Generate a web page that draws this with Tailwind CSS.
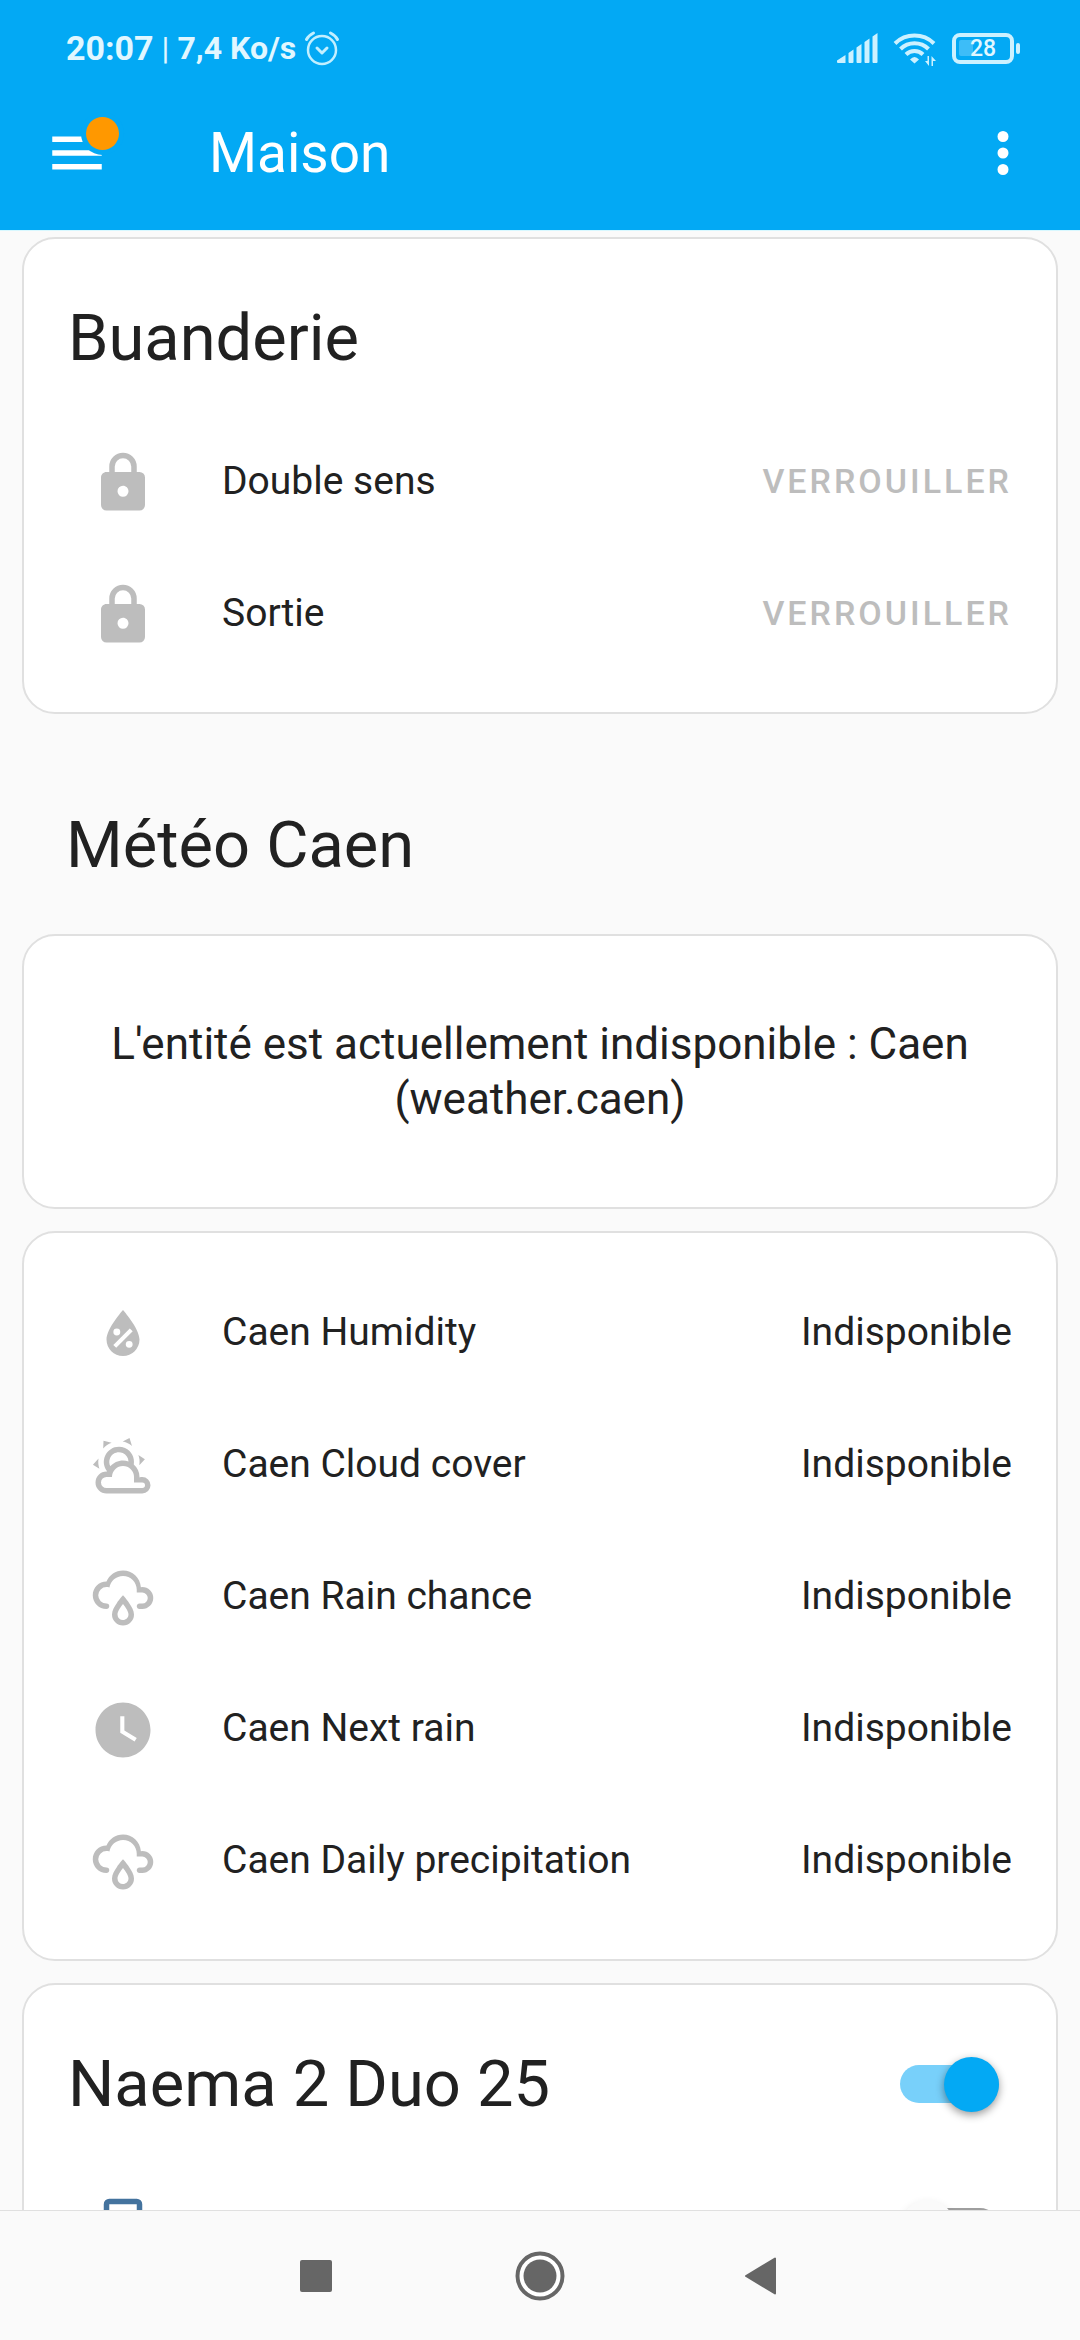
<!DOCTYPE html>
<html lang="fr">
  <head>
    <meta charset="UTF-8" />
    <meta name="viewport" content="width=device-width, initial-scale=1.0" />
    <title>Maison</title>
    <script src="https://cdn.jsdelivr.net/npm/@tailwindcss/browser@4"></script>
  </head>
  <body
    class="flex h-screen flex-col overflow-hidden bg-[#fafafa] font-['Roboto',sans-serif] text-[#212121]"
  >
    <!-- Icon definitions -->
    <svg class="hidden" xmlns="http://www.w3.org/2000/svg">
      <symbol id="icon-lock" viewBox="0 0 24 24">
        <path
          d="M12,17A2,2 0 0,0 14,15C14,13.89 13.1,13 12,13A2,2 0 0,0 10,15A2,2 0 0,0 12,17M18,8A2,2 0 0,1 20,10V20A2,2 0 0,1 18,22H6A2,2 0 0,1 4,20V10C4,8.89 4.9,8 6,8H7V6A5,5 0 0,1 12,1A5,5 0 0,1 17,6V8H18M12,3A3,3 0 0,0 9,6V8H15V6A3,3 0 0,0 12,3Z"
        />
      </symbol>
      <symbol id="icon-rain" viewBox="0 0 24 24">
        <path
          d="M6,14.03A1,1 0 0,1 7,15.03C7,15.58 6.55,16.03 6,16.03C3.24,16.03 1,13.79 1,11.03C1,8.27 3.24,6.03 6,6.03C7,3.68 9.3,2.03 12,2.03C15.43,2.03 18.24,4.69 18.5,8.06L19,8.03A4,4 0 0,1 23,12.03C23,14.23 21.21,16.03 19,16.03H18C17.45,16.03 17,15.58 17,15.03C17,14.47 17.45,14.03 18,14.03H19A2,2 0 0,0 21,12.03A2,2 0 0,0 19,10.03H17V9.03C17,6.27 14.76,4.03 12,4.03C9.5,4.03 7.45,5.84 7.06,8.21C6.73,8.09 6.37,8.03 6,8.03A3,3 0 0,0 3,11.03A3,3 0 0,0 6,14.03M12,14.15C12.18,14.39 12.37,14.66 12.56,14.94C13,15.56 14,17.03 14,18C14,19.11 13.1,20 12,20A2,2 0 0,1 10,18C10,17.03 11,15.56 11.44,14.94C11.63,14.66 11.82,14.4 12,14.15M12,11.03L11.5,11.59C11.5,11.59 10.65,12.55 9.79,13.81C8.93,15.06 8,16.56 8,18A4,4 0 0,0 12,22A4,4 0 0,0 16,18C16,16.56 15.07,15.06 14.21,13.81C13.35,12.55 12.5,11.59 12.5,11.59"
        />
      </symbol>
    </svg>

    <header class="shrink-0 border-b border-[#d8f8ff] bg-[#03a9f4]">
      <!-- Status bar -->
      <div class="flex h-[76px] items-center justify-between pt-5 pr-[60px] pl-[66px] text-[#e1f7ff]">
        <div class="flex items-center gap-2">
          <span class="text-[34px] leading-10 font-bold">20:07</span>
          <span class="text-[32px] leading-10">|</span>
          <span class="text-[32px] leading-10 font-bold">7,4 Ko/s</span>
          <svg
            class="size-9 stroke-[#c2efff]"
            viewBox="0 0 36 36"
            fill="none"
            stroke-width="3"
            stroke-linecap="round"
            stroke-linejoin="round"
          >
            <circle cx="18" cy="20" r="14" stroke-width="2.5" />
            <path d="M13 18l5 5 5-5" />
            <path d="M2.5 9.5c1.5-3 4-5 7-6.5M33.5 9.5c-1.5-3-4-5-7-6.5" />
          </svg>
        </div>
        <div class="flex items-center gap-[15px]">
          <svg class="h-[30px] w-[41px] fill-[#ccf1ff]" viewBox="0 0 41 30">
            <path
              d="M0 27.5L8.5 22v8H1q-1 0-1-1zM11.500 20l5-3.500V29q0 1-1 1h-3q-1 0-1-1zM19.500 14.500l5-3.500v18q0 1-1 1h-3q-1 0-1-1zM27.500 9l5-3.500V29q0 1-1 1h-3q-1 0-1-1zM35.500 3.500l5-3.500v29q0 1-1 1h-3q-1 0-1-1z"
            />
          </svg>
          <svg class="h-9 w-11" viewBox="0 0 44 36" fill="none">
            <g stroke="#ccf1ff" stroke-width="4">
              <path d="M2 13.5a28 28 0 0 1 39 0" />
              <path d="M7.5 19a20 20 0 0 1 28 0" />
              <path d="M13 24.5a12 12 0 0 1 17 0" />
            </g>
            <path d="M21.5 33.5l-4.5-4q4.5-5 9 0z" fill="#ccf1ff" />
            <path d="M36 26v10l-4-5h2.5v-5zM38.5 36V26l4.5 5h-3v5z" fill="#ccf1ff" />
          </svg>
          <div class="flex items-center gap-[2px]">
            <div
              class="relative flex h-[31px] w-[62px] items-center justify-center rounded-[8px] border-4 border-[#ccf1ff]"
            >
              <div class="absolute left-[3px] h-4 w-[14px] rounded-[2px] bg-[#3dbdf8]"></div>
              <span class="relative pt-[2px] text-[23px] leading-6 font-medium">28</span>
            </div>
            <div class="h-[11px] w-1 rounded-[2px] bg-[#ccf1ff]"></div>
          </div>
        </div>
      </div>

      <!-- Toolbar -->
      <div class="flex h-[154px] items-center px-11 text-white">
        <button class="relative" aria-label="Menu">
          <svg class="size-[66px] fill-white" viewBox="0 0 24 24">
            <path d="M3,6H21V8H3V6M3,11H21V13H3V11M3,16H21V18H3V16Z" />
          </svg>
          <span
            class="absolute -top-[3px] left-[42px] size-[33px] rounded-full bg-[#ff9800] ring-[5px] ring-[#03a9f4]"
          ></span>
        </button>
        <h1 class="ml-[99px] flex-1 text-[55px] leading-[66px]">Maison</h1>
        <button aria-label="Plus d'options">
          <svg class="size-[66px] fill-white" viewBox="0 0 24 24">
            <path
              d="M12,16A2,2 0 0,1 14,18A2,2 0 0,1 12,20A2,2 0 0,1 10,18A2,2 0 0,1 12,16M12,10A2,2 0 0,1 14,12A2,2 0 0,1 12,14A2,2 0 0,1 10,12A2,2 0 0,1 12,10M12,4A2,2 0 0,1 14,6A2,2 0 0,1 12,8A2,2 0 0,1 10,6A2,2 0 0,1 12,4Z"
            />
          </svg>
        </button>
      </div>
    </header>

    <main class="flex min-h-0 flex-1 flex-col gap-[22px] overflow-hidden px-[22px] pt-[6px]">
      <!-- Buanderie -->
      <section class="shrink-0 rounded-[33px] border-2 border-[#e0e0e0] bg-white px-11 pt-[33px] pb-11">
        <h2 class="mb-[22px] text-[65px] leading-[132px]">Buanderie</h2>
        <ul class="flex flex-col gap-[22px] text-[39px] leading-[55px]">
          <li class="flex h-[110px] items-center">
            <div class="mr-11 flex w-[110px] justify-center pt-1">
              <svg class="size-[66px] fill-[#bdbdbd]"><use href="#icon-lock" /></svg>
            </div>
            <span class="flex-1">Double sens</span>
            <button class="text-[34px] font-medium tracking-[3px] text-[#bdbdbd]" disabled>
              VERROUILLER
            </button>
          </li>
          <li class="flex h-[110px] items-center">
            <div class="mr-11 flex w-[110px] justify-center pt-1">
              <svg class="size-[66px] fill-[#bdbdbd]"><use href="#icon-lock" /></svg>
            </div>
            <span class="flex-1">Sortie</span>
            <button class="text-[34px] font-medium tracking-[3px] text-[#bdbdbd]" disabled>
              VERROUILLER
            </button>
          </li>
        </ul>
      </section>

      <!-- Météo -->
      <h2 class="shrink-0 px-11 pt-[42px] text-[65px] leading-[134px]">Météo Caen</h2>

      <section
        class="flex min-h-[275px] shrink-0 items-center justify-center rounded-[33px] border-2 border-[#e0e0e0] bg-white px-[66px]"
      >
        <p class="text-center text-[44px] leading-[55px]">
          L'entité est actuellement indisponible : Caen (weather.caen)
        </p>
      </section>

      <section class="shrink-0 rounded-[33px] border-2 border-[#e0e0e0] bg-white p-11">
        <ul class="flex flex-col gap-[22px] text-[39px] leading-[55px]">
          <li class="flex h-[110px] items-center">
            <div class="mr-11 flex w-[110px] justify-center pt-1">
              <svg class="size-[66px] fill-[#bdbdbd]" viewBox="0 0 24 24">
                <path
                  d="M12,3.25C12,3.25 6,10 6,14C6,17.32 8.69,20 12,20A6,6 0 0,0 18,14C18,10 12,3.25 12,3.25M14.47,9.97L15.53,11.03L9.53,17.03L8.47,15.97M9.75,10A1.25,1.25 0 0,1 11,11.25A1.25,1.25 0 0,1 9.75,12.5A1.25,1.25 0 0,1 8.5,11.25A1.25,1.25 0 0,1 9.75,10M14.25,14.5A1.25,1.25 0 0,1 15.5,15.75A1.25,1.25 0 0,1 14.25,17A1.25,1.25 0 0,1 13,15.75A1.25,1.25 0 0,1 14.25,14.5Z"
                />
              </svg>
            </div>
            <span class="flex-1">Caen Humidity</span>
            <span>Indisponible</span>
          </li>
          <li class="flex h-[110px] items-center">
            <div class="mr-11 flex w-[110px] justify-center pt-1">
              <svg class="size-[66px] fill-[#bdbdbd]" viewBox="0 0 24 24">
                <path
                  d="M12.74,5.47C15.1,6.5 16.35,9.03 15.92,11.46C17.19,12.56 18,14.19 18,16V16.17C18.31,16.06 18.65,16 19,16A3,3 0 0,1 22,19A3,3 0 0,1 19,22H6A4,4 0 0,1 2,18A4,4 0 0,1 6,14H6.27C5,12.45 4.6,10.24 5.5,8.26C6.72,5.5 9.97,4.24 12.74,5.47M11.93,7.3C10.16,6.5 8.09,7.31 7.31,9.07C6.85,10.09 6.93,11.22 7.41,12.13C8.5,10.83 10.16,10 12,10C12.7,10 13.38,10.12 14,10.34C13.94,9.06 13.18,7.86 11.93,7.3M13.55,3.64C13,3.4 12.45,3.23 11.88,3.12L14.37,1.82L15.27,4.71C14.76,4.29 14.19,3.93 13.55,3.64M6.09,4.44C5.6,4.79 5.17,5.19 4.8,5.63L4.91,2.82L7.87,3.5C7.25,3.71 6.65,4.03 6.09,4.44M18,9.71C17.91,9.12 17.78,8.55 17.59,8L19.97,9.5L17.92,11.73C18.03,11.08 18.05,10.4 18,9.71M3.04,11.3C3.11,11.9 3.24,12.47 3.43,13L1.06,11.5L3.1,9.28C3,9.93 2.97,10.61 3.04,11.3M19,18H16V16A4,4 0 0,0 12,12A4,4 0 0,0 8,16H6A2,2 0 0,0 4,18A2,2 0 0,0 6,20H19A1,1 0 0,0 20,19A1,1 0 0,0 19,18Z"
                />
              </svg>
            </div>
            <span class="flex-1">Caen Cloud cover</span>
            <span>Indisponible</span>
          </li>
          <li class="flex h-[110px] items-center">
            <div class="mr-11 flex w-[110px] justify-center pt-1">
              <svg class="size-[66px] fill-[#bdbdbd]"><use href="#icon-rain" /></svg>
            </div>
            <span class="flex-1">Caen Rain chance</span>
            <span>Indisponible</span>
          </li>
          <li class="flex h-[110px] items-center">
            <div class="mr-11 flex w-[110px] justify-center pt-1">
              <svg class="size-[66px] fill-[#bdbdbd]" viewBox="0 0 24 24">
                <path
                  d="M12 2C6.5 2 2 6.5 2 12S6.5 22 12 22 22 17.5 22 12 17.5 2 12 2M16.2 16.2L11 13V7H12.5V12.2L17 14.9L16.2 16.2Z"
                />
              </svg>
            </div>
            <span class="flex-1">Caen Next rain</span>
            <span>Indisponible</span>
          </li>
          <li class="flex h-[110px] items-center">
            <div class="mr-11 flex w-[110px] justify-center pt-1">
              <svg class="size-[66px] fill-[#bdbdbd]"><use href="#icon-rain" /></svg>
            </div>
            <span class="flex-1">Caen Daily precipitation</span>
            <span>Indisponible</span>
          </li>
        </ul>
      </section>

      <!-- Naema -->
      <section class="shrink-0 rounded-[33px] border-2 border-[#e0e0e0] bg-white px-11 pt-[33px] pb-11">
        <div class="mb-[22px] flex items-center justify-between pr-[13px]">
          <h2 class="text-[65px] leading-[132px]">
            <label for="naema">Naema 2 Duo 25</label>
          </h2>
          <input
            id="naema"
            type="checkbox"
            checked
            class="relative h-[38px] w-[99px] appearance-none rounded-full bg-[#9e9e9e] before:absolute before:-top-2 before:left-0 before:size-[55px] before:rounded-full before:bg-[#fafafa] before:shadow-[0_3px_8px_rgba(0,0,0,0.4)] checked:bg-[#78d0fa] checked:before:left-11 checked:before:bg-[#03a9f4]"
          />
        </div>
        <ul>
          <li class="flex h-[110px] items-center justify-between pr-[13px]">
            <div class="flex w-[110px] justify-center pt-1">
              <svg class="size-[66px]" viewBox="0 0 24 24" fill="none" stroke="#44739e" stroke-width="2">
                <rect x="6" y="2" width="12" height="20" rx="1" />
              </svg>
            </div>
            <input
              type="checkbox"
              aria-label="Chauffage"
              class="relative h-[38px] w-[99px] appearance-none rounded-full bg-[#9e9e9e] before:absolute before:-top-2 before:left-0 before:size-[55px] before:rounded-full before:bg-[#fafafa] before:shadow-[0_3px_8px_rgba(0,0,0,0.1)] checked:bg-[#78d0fa] checked:before:left-11 checked:before:bg-[#03a9f4]"
            />
          </li>
        </ul>
      </section>
    </main>

    <!-- Navigation bar -->
    <nav class="flex h-[130px] shrink-0 items-center justify-center border-t border-[#e0e0e0] bg-[#fafafa]">
      <button class="flex w-56 justify-center" aria-label="Applications récentes">
        <span class="size-8 rounded-[2px] bg-[#666]"></span>
      </button>
      <button class="flex w-56 justify-center" aria-label="Accueil">
        <svg class="size-[50px]" viewBox="0 0 50 50">
          <circle cx="25" cy="25" r="22.5" fill="#fff" stroke="#666" stroke-width="4" />
          <circle cx="25" cy="25" r="16.5" fill="#666" />
        </svg>
      </button>
      <button class="flex w-56 justify-center" aria-label="Retour">
        <svg class="size-10" viewBox="0 0 40 40" fill="#666" stroke="#666" stroke-width="2" stroke-linejoin="round">
          <path d="M2 20L31 2.500V37.500Z" />
        </svg>
      </button>
    </nav>
  </body>
</html>
